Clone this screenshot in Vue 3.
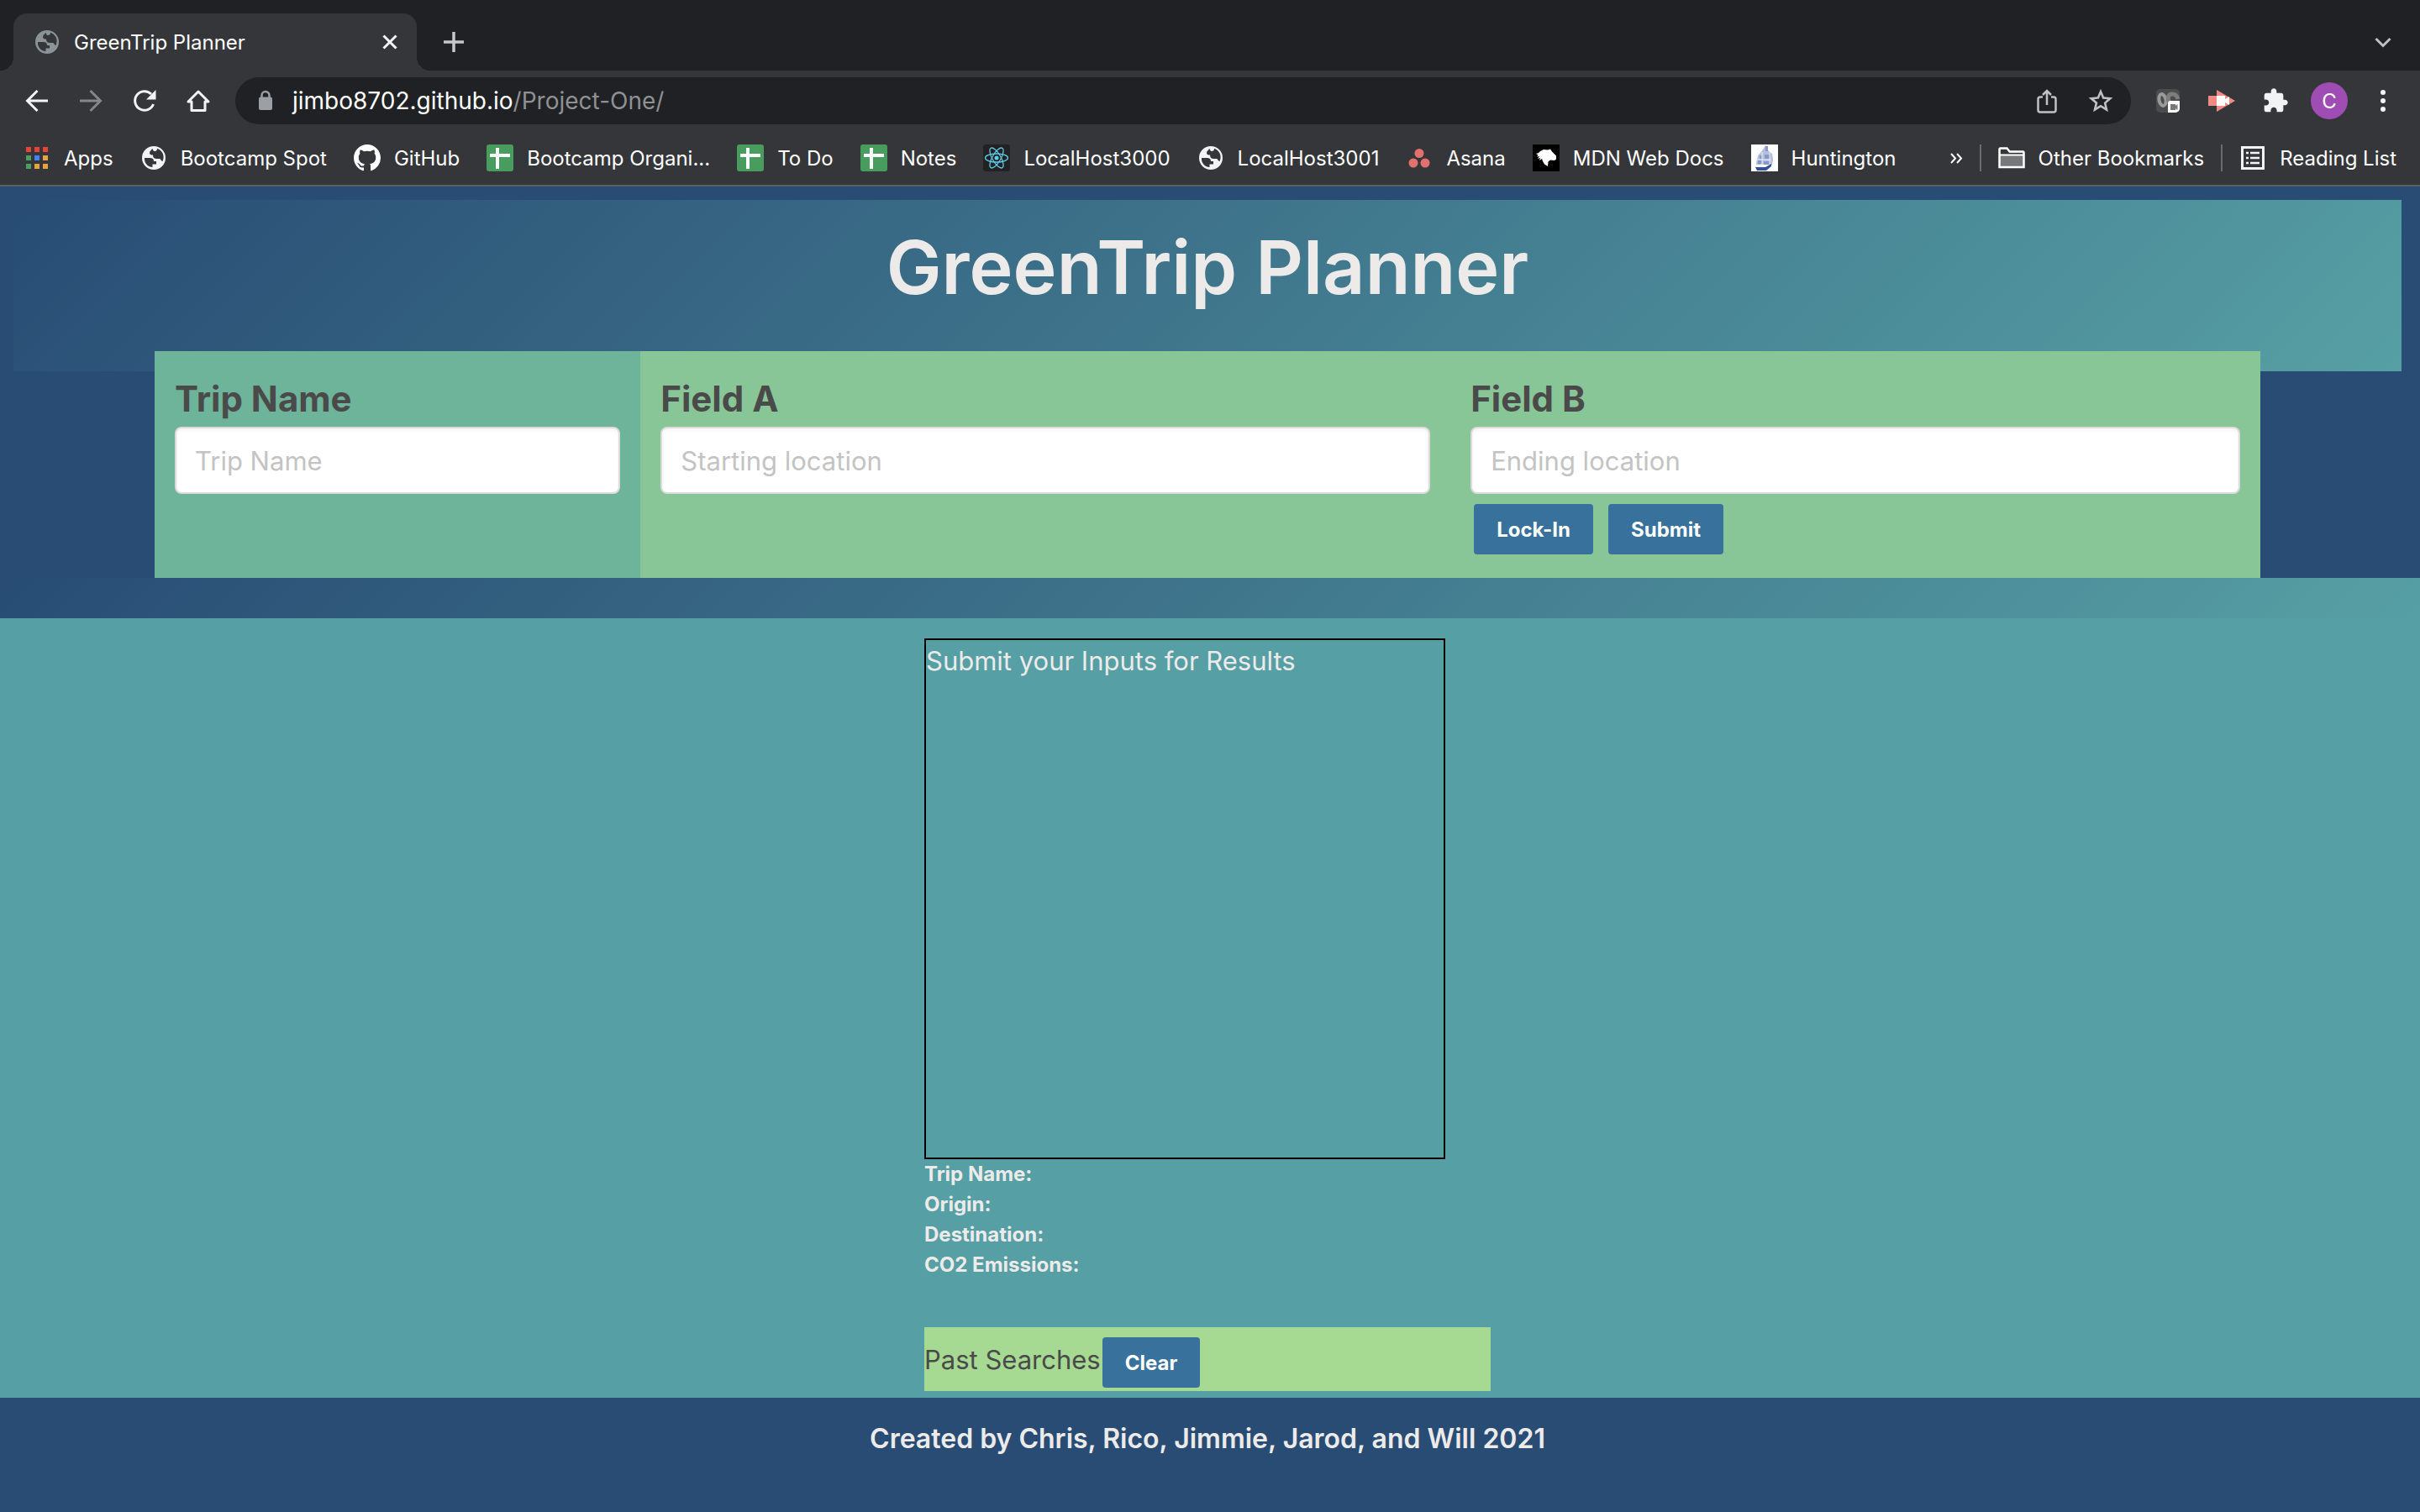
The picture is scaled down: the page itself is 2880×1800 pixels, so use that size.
<script setup>
import { ref } from 'vue'

const trip = ref('')
const origin = ref('')
const destination = ref('')

const bookmarks = [
  { icon: 'apps', label: 'Apps' },
  { icon: 'globe', label: 'Bootcamp Spot' },
  { icon: 'github', label: 'GitHub' },
  { icon: 'sheet', label: 'Bootcamp Organi...' },
  { icon: 'sheet', label: 'To Do' },
  { icon: 'sheet', label: 'Notes' },
  { icon: 'react', label: 'LocalHost3000' },
  { icon: 'globe', label: 'LocalHost3001' },
  { icon: 'asana', label: 'Asana' },
  { icon: 'mdn', label: 'MDN Web Docs' },
  { icon: 'ship', label: 'Huntington' }
]

const appDots = [
  [3, 3, '#ea4335'], [13, 3, '#ea4335'], [23, 3, '#ea4335'],
  [3, 13, '#4c9f5e'], [13, 13, '#4285f4'], [23, 13, '#e8a33d'],
  [3, 23, '#4c9f5e'], [13, 23, '#e8a33d'], [23, 23, '#e8a33d']
]

const details = ['Trip Name:', 'Origin:', 'Destination:', 'CO2 Emissions:']

const globePath = 'M16 2a14 14 0 1 0 0 28 14 14 0 0 0 0-28zM5 16h6.500c3 0 4.500 1.500 4.500 4h3v3.500h-4.500V27C8.500 26.500 4.500 22 5 16zM14 5c-1 2.500-3 2.500-3 5 0 2 1.500 2.500 4 2.500 0 3 1.500 4.500 4.500 4.500h3.500c1.500 0 1.500 3 3.500 3 3-7-.5-13-6.500-15.200 0 3-1.500 3.200-3.500 3.200-1.500 0-1-2.500-2.500-3z'
</script>

<template>
  <div class="window">
    <header class="browser">
      <div class="tabs">
        <div class="tab">
          <svg class="icon" viewBox="0 0 32 32"><path :d="globePath" fill="#8b9298" fill-rule="evenodd" /></svg>
          <span class="tab-title">GreenTrip Planner</span>
          <button class="plain" aria-label="Close tab">
            <svg class="icon" viewBox="0 0 32 32"><path d="M8.500 8.500l15 15m0-15l-15 15" stroke="#f1f3f4" stroke-width="3" /></svg>
          </button>
        </div>
        <button class="plain new-tab" aria-label="New tab">
          <svg class="icon" viewBox="0 0 32 32"><path d="M16 4v24M4 16h24" stroke="#c6c7ca" stroke-width="3.500" /></svg>
        </button>
        <button class="plain tab-search" aria-label="Search tabs">
          <svg class="icon" viewBox="0 0 32 32"><path d="M7.500 12l8.500 8.500 8.500-8.500" fill="none" stroke="#c0c1c3" stroke-width="3" /></svg>
        </button>
      </div>

      <div class="toolbar">
        <div class="nav">
          <button class="plain" aria-label="Back">
            <svg class="icon" viewBox="0 0 32 32"><path d="M29 16H5M16.500 4L4.500 16l12 12" fill="none" stroke="#f1f3f4" stroke-width="3" /></svg>
          </button>
          <button class="plain" aria-label="Forward">
            <svg class="icon" viewBox="0 0 32 32"><path d="M3 16h24M15.500 4l12 12-12 12" fill="none" stroke="#85868a" stroke-width="3" /></svg>
          </button>
          <button class="plain" aria-label="Reload">
            <svg class="icon" viewBox="0 0 32 32">
              <path d="M26.500 20A11.300 11.300 0 1 1 24 8" fill="none" stroke="#f1f3f4" stroke-width="3" />
              <path d="M29.500 3v11.500H18z" fill="#f1f3f4" />
            </svg>
          </button>
          <button class="plain" aria-label="Home">
            <svg class="icon" viewBox="0 0 32 32"><path d="M4 17L16 5l12 12h-4v10.500H8V17z" fill="none" stroke="#f1f3f4" stroke-width="3" stroke-linejoin="round" /></svg>
          </button>
        </div>
        <div class="address">
          <svg class="icon" viewBox="0 0 32 32">
            <rect x="8" y="11.500" width="16" height="15.500" rx="2" fill="#9aa0a6" />
            <path d="M11.500 12V9.500a4.500 4.500 0 0 1 9 0V12" fill="none" stroke="#9aa0a6" stroke-width="2.500" />
          </svg>
          <span class="url">jimbo8702.github.io<span class="path">/Project-One/</span></span>
          <button class="plain" aria-label="Share">
            <svg class="icon" viewBox="0 0 32 32"><path d="M11 11.500H8a2.500 2.500 0 0 0-2.500 2.500v13A2.500 2.500 0 0 0 8 29.500h16a2.500 2.500 0 0 0 2.500-2.500V14a2.500 2.500 0 0 0-2.500-2.500h-3M16 21V4.500M11 9l5-5 5 5" fill="none" stroke="#c0c1c3" stroke-width="2.500" /></svg>
          </button>
          <button class="plain" aria-label="Bookmark this tab">
            <svg class="icon" viewBox="0 0 24 24"><path d="M22.800 9.200l-7.800-.7L12 1.300 9 8.500l-7.800.7 5.900 5.100L5.300 22l6.700-4.100 6.700 4.100-1.800-7.700 5.900-5.100zM12 15.500l-3.700 2.300 1-4.300-3.300-2.900 4.400-.4L12 6.200l1.700 4.100 4.400.4-3.300 2.900 1 4.300z" fill="#c0c1c3" /></svg>
          </button>
        </div>
        <div class="extensions">
          <button class="plain" aria-label="Recorder">
            <svg class="icon" viewBox="0 0 32 32">
              <rect x="2" y="2" width="28" height="28" rx="5" fill="#4c4c4c" />
              <ellipse cx="9.500" cy="15" rx="4" ry="7" fill="none" stroke="#9a9a9a" stroke-width="4" transform="rotate(-12 9.500 15)" />
              <path d="M18 19c-3-6-2-11 3-11 4 0 6 2 7 6" fill="none" stroke="#7d7d7d" stroke-width="5" />
              <path d="M19 16h11v9a5 5 0 0 1-5 5h-9V19a3 3 0 0 1 3-3z" fill="#fff" />
              <path d="M19 20h6v2l2.500-2v7L25 25v2h-6z" fill="#777" />
            </svg>
          </button>
          <button class="plain" aria-label="Screen capture">
            <svg class="icon" viewBox="0 0 32 32">
              <path d="M0 10h10V3l22 13-22 13v-7H0z" fill="#f28b82" />
              <path d="M10 10h10v4l5-3v10l-5-3v4H10z" fill="#fff" />
            </svg>
          </button>
          <button class="plain" aria-label="Extensions">
            <svg class="icon" viewBox="0 0 24 24"><path d="M20.500 11H19V7c0-1.100-.9-2-2-2h-4V3.500C13 2.120 11.880 1 10.500 1S8 2.120 8 3.500V5H4c-1.100 0-1.990.9-1.990 2v3.800H3.500c1.490 0 2.700 1.210 2.700 2.700s-1.210 2.700-2.700 2.700H2V20c0 1.100.9 2 2 2h3.800v-1.500c0-1.490 1.210-2.700 2.700-2.700 1.490 0 2.700 1.210 2.700 2.700V22H17c1.100 0 2-.9 2-2v-4h1.500c1.380 0 2.500-1.120 2.500-2.500S21.880 11 20.500 11z" fill="#f1f3f4" /></svg>
          </button>
          <button class="avatar" aria-label="Profile">C</button>
          <button class="plain" aria-label="Menu">
            <svg class="icon" viewBox="0 0 32 32" fill="#f1f3f4"><circle cx="16" cy="6" r="3" /><circle cx="16" cy="16" r="3" /><circle cx="16" cy="26" r="3" /></svg>
          </button>
        </div>
      </div>

      <nav class="bookmarks">
        <a v-for="b in bookmarks" :key="b.label" href="#" class="bookmark">
          <svg class="icon" viewBox="0 0 32 32">
            <template v-if="b.icon === 'apps'">
              <rect v-for="(d, i) in appDots" :key="i" :x="d[0]" :y="d[1]" width="6" height="6" :fill="d[2]" />
            </template>
            <path v-else-if="b.icon === 'globe'" :d="globePath" fill="#f1f3f4" fill-rule="evenodd" />
            <path v-else-if="b.icon === 'github'" transform="scale(2)" fill="#fff" d="M8 0C3.580 0 0 3.580 0 8c0 3.540 2.290 6.530 5.470 7.590.4.070.55-.17.55-.38 0-.19-.01-.82-.01-1.490-2.010.37-2.530-.49-2.690-.94-.09-.23-.48-.94-.82-1.130-.28-.15-.68-.52-.01-.53.63-.01 1.080.58 1.230.82.72 1.210 1.870.87 2.330.66.07-.52.28-.87.51-1.070-1.780-.2-3.640-.89-3.640-3.950 0-.87.31-1.590.82-2.150-.08-.2-.36-1.020.08-2.120 0 0 .67-.21 2.200.82.64-.18 1.320-.27 2-.27s1.360.09 2 .27c1.530-1.040 2.200-.82 2.200-.82.44 1.100.16 1.920.08 2.120.51.56.82 1.270.82 2.150 0 3.070-1.870 3.750-3.650 3.950.29.25.54.73.54 1.480 0 1.070-.01 1.930-.01 2.200 0 .21.15.46.55.38A8.010 8.010 0 0 0 16 8c0-4.420-3.580-8-8-8z" />
            <template v-else-if="b.icon === 'sheet'">
              <rect width="32" height="32" rx="3" fill="#489d5e" />
              <path d="M13 4v25M4 13h24" stroke="#fff" stroke-width="4" />
            </template>
            <template v-else-if="b.icon === 'react'">
              <rect width="32" height="32" rx="3" fill="#222" />
              <g fill="none" stroke="#61c9ea" stroke-width="1.300">
                <ellipse cx="16" cy="16" rx="13.500" ry="5" />
                <ellipse cx="16" cy="16" rx="13.500" ry="5" transform="rotate(60 16 16)" />
                <ellipse cx="16" cy="16" rx="13.500" ry="5" transform="rotate(120 16 16)" />
              </g>
              <circle cx="16" cy="16" r="2.500" fill="#61c9ea" />
            </template>
            <g v-else-if="b.icon === 'asana'" fill="#e2706c">
              <circle cx="16" cy="10.500" r="5.500" /><circle cx="9" cy="22" r="5.500" /><circle cx="23" cy="22" r="5.500" />
            </g>
            <template v-else-if="b.icon === 'mdn'">
              <rect width="32" height="32" fill="#000" />
              <path d="M4 11l3-1 2-2 4-2 5 .500 3-1 2 3 3 3 2 2v4l-2 1.500-5-.5-2.500 2L18 26l-4-2.500-2-3.500-1-3-3 2 1-3-3 1 2-3-3 .5 1.500-2z" fill="#fff" />
            </template>
            <template v-else>
              <rect width="32" height="32" fill="#fff" />
              <path d="M8 13l3-3 3-4 3-5 3 2v4l5 4 1 7-1 6H6l1-6z" fill="#b4bfdd" />
              <path d="M17 2h3v6h-3zM10 13h3v4h-3zM16 12h6v5h-6zM8 19h5v4H8zM15 20h7v4h-7z" fill="#8797c6" />
              <path d="M13 9v17M22 9v15M6 18h18" stroke="#e8ecf6" />
              <path d="M5 27h12l7-4v3l-6 5H7z" fill="#3350a0" />
            </template>
          </svg>
          <span>{{ b.label }}</span>
        </a>
        <div class="bookmarks-end">
          <button class="plain more" aria-label="More bookmarks">
            <svg class="icon" viewBox="0 0 32 32"><path d="M10 11l5 5.500-5 5.500M17 11l5 5.500-5 5.500" fill="none" stroke="#fff" stroke-width="2" /></svg>
          </button>
          <div class="folders">
            <a href="#" class="bookmark divided">
              <svg class="icon" viewBox="0 0 32 32">
                <path d="M1.500 27V5.500a1 1 0 0 1 1-1h8l3 4h16a1 1 0 0 1 1 1V27z" fill="#77787b" stroke="#fff" stroke-width="2.500" />
                <path d="M3 6h7l3 4h16v2H3z" fill="#35363a" />
                <path d="M2 12.500h28" stroke="#fff" stroke-width="2" />
              </svg>
              <span>Other Bookmarks</span>
            </a>
            <a href="#" class="bookmark divided">
              <svg class="icon" viewBox="0 0 32 32">
                <rect x="3.500" y="3.500" width="25" height="25" fill="none" stroke="#f1f3f4" stroke-width="3" />
                <path d="M8 10h3m2 0h11M8 16h3m2 0h11M8 22h3m2 0h11" stroke="#f1f3f4" stroke-width="2.500" />
              </svg>
              <span>Reading List</span>
            </a>
          </div>
        </div>
      </nav>
    </header>

    <div class="page">
      <div class="top">
        <div class="hero"><h1>GreenTrip Planner</h1></div>
        <form class="planner" @submit.prevent>
          <div class="field trip">
            <label for="trip">Trip Name</label>
            <input id="trip" v-model="trip" type="text" placeholder="Trip Name" />
          </div>
          <div class="field">
            <label for="origin">Field A</label>
            <input id="origin" v-model="origin" type="text" placeholder="Starting location" />
          </div>
          <div class="field">
            <label for="destination">Field B</label>
            <input id="destination" v-model="destination" type="text" placeholder="Ending location" />
            <div class="actions">
              <button type="button" class="button">Lock-In</button>
              <button type="submit" class="button">Submit</button>
            </div>
          </div>
        </form>
      </div>
      <div class="band"></div>
      <main>
        <div class="column">
          <section class="results">Submit your Inputs for Results</section>
          <ul class="details">
            <li v-for="d in details" :key="d">{{ d }}</li>
          </ul>
          <section class="past">
            <span>Past Searches</span>
            <button type="button" class="button">Clear</button>
          </section>
        </div>
      </main>
      <footer>Created by Chris, Rico, Jimmie, Jarod, and Will 2021</footer>
    </div>
  </div>
</template>

<style>
body {
  background: #284c74;
}
</style>

<style scoped>
.window {
  min-height: 100vh;
  display: flex;
  flex-direction: column;
  font-family: Inter, "Liberation Sans", sans-serif;
  font-size: 31px;
  color: #edebea;
}
.window *, .window *::before, .window *::after {
  box-sizing: border-box;
}
.icon {
  display: block;
  flex: none;
  width: 32px;
  height: 32px;
}
.plain {
  flex: none;
  padding: 0;
  border: 0;
  background: none;
}

/* Browser frame */
.browser {
  background: #35363a;
  border-bottom: 2px solid #5f6063;
  color: #fff;
  font-size: 24px;
}
.tabs {
  display: flex;
  align-items: flex-end;
  height: 84px;
  padding: 0 28px 0 16px;
  background: #202124;
}
.tab {
  position: relative;
  display: flex;
  align-items: center;
  width: 480px;
  height: 68px;
  padding: 0 16px 0 24px;
  border-radius: 16px 16px 0 0;
  background: #35363a;
}
.tab::before, .tab::after {
  content: "";
  position: absolute;
  bottom: 0;
  width: 16px;
  height: 16px;
}
.tab::before {
  right: 100%;
  background: radial-gradient(circle at 0 0, #202124 16px, #35363a 16px);
}
.tab::after {
  left: 100%;
  background: radial-gradient(circle at 100% 0, #202124 16px, #35363a 16px);
}
.tab-title {
  flex: 1;
  padding-left: 16px;
}
.new-tab, .tab-search {
  padding: 18px 0;
}
.new-tab {
  margin-left: 28px;
}
.tab-search {
  margin-left: auto;
}
.toolbar {
  display: flex;
  align-items: center;
  height: 72px;
  padding: 0 28px;
}
.nav, .extensions {
  display: flex;
  align-items: center;
  gap: 32px;
}
.address {
  flex: 1;
  display: flex;
  align-items: center;
  gap: 32px;
  height: 56px;
  margin: 0 28px;
  padding: 0 20px;
  border-radius: 28px;
  background: #202124;
}
.url {
  flex: 1;
  margin-left: -16px;
  font-size: 28px;
}
.path {
  color: #8f9093;
}
.avatar {
  width: 44px;
  height: 44px;
  margin: 0 -6px;
  padding: 0;
  border: 0;
  border-radius: 50%;
  background: #9f4db5;
  color: #fff;
  font: 24px Inter, sans-serif;
}
.bookmarks {
  display: flex;
  align-items: center;
  gap: 32px;
  height: 64px;
  padding: 0 28px;
}
.bookmark {
  display: flex;
  align-items: center;
  gap: 16px;
  color: #fff;
  text-decoration: none;
  white-space: nowrap;
}
.bookmarks-end {
  display: flex;
  align-items: center;
  gap: 12px;
  margin-left: auto;
}
.folders {
  display: flex;
  gap: 20px;
}
.divided::before {
  content: "";
  width: 2px;
  height: 32px;
  margin-right: 4px;
  background: #6a6b6e;
}

/* Planner page */
.page {
  flex: 1;
  display: flex;
  flex-direction: column;
  background: #284c74;
}
.top {
  padding: 16px 22px 0 16px;
}
.hero {
  padding: 24px 0 68px;
  background: linear-gradient(135deg, #284c74, #569fa4);
  text-align: center;
}
h1 {
  margin: 0;
  font-size: 88px;
  font-weight: 600;
  line-height: 112px;
}
.planner {
  display: grid;
  grid-template-columns: 3fr 5fr 5fr;
  margin: -24px 168px 0;
  background: #89c697;
}
.field {
  padding: 24px 24px 28px;
}
.trip {
  background: #6db49a;
}
label {
  display: block;
  color: #4a4a4a;
  font-size: 42px;
  font-weight: 700;
  line-height: 66px;
}
input {
  display: block;
  width: 100%;
  height: 80px;
  padding: 0 22px;
  border: 2px solid #dbdbdb;
  border-radius: 8px;
  box-shadow: inset 0 2px 4px rgba(10, 10, 10, 0.05);
  background: #fff;
  color: #363636;
  font: 31px Inter, "Liberation Sans", sans-serif;
}
input::placeholder {
  color: #c3c3c3;
  opacity: 1;
}
.actions {
  display: flex;
  gap: 18px;
  padding: 12px 4px 0;
}
.button {
  height: 60px;
  padding: 0 27px;
  border: 0;
  border-radius: 4px;
  background: #38719b;
  color: #fff;
  font: 700 24px Inter, "Liberation Sans", sans-serif;
}
.band {
  height: 48px;
  background: linear-gradient(135deg, #284c74, #569fa4);
}
main {
  display: flex;
  justify-content: center;
  padding: 24px 6px 8px 0;
  background: #569fa4;
}
.column {
  width: 674px;
}
.results {
  width: 620px;
  height: 620px;
  border: 2px solid #000;
  line-height: 50px;
}
.details {
  margin: 0 0 56px;
  padding: 0;
  list-style: none;
  font-size: 24px;
  font-weight: 700;
  line-height: 36px;
}
.past {
  display: flex;
  align-items: flex-start;
  gap: 2px;
  padding: 12px 0 4px;
  background: #a6d992;
  color: #4a4a4a;
  line-height: 54px;
}
footer {
  padding: 24px 6px 24px 0;
  font-size: 32px;
  font-weight: 600;
  line-height: 50px;
  text-align: center;
}
</style>
